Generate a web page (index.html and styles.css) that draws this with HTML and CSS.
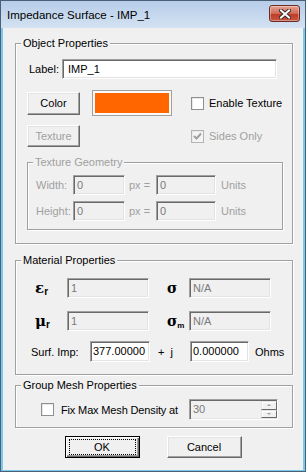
FILE: index.html
```html
<!DOCTYPE html>
<html lang="en">
<head>
    <meta charset="UTF-8">
    <title>Impedance Surface - IMP_1</title>
    <link rel="stylesheet" href="styles.css">
</head>
<body>
    <div class="window">
        <div class="titlebar">
            <span class="title">Impedance Surface - IMP_1</span>
            <div class="close-btn">
                <svg width="12" height="10" viewBox="0 0 12 10">
                    <path d="M2 1.5 L10 8.5 M10 1.5 L2 8.5" stroke="#3a2a2a" stroke-width="4" stroke-linecap="square"/>
                    <path d="M2 1.5 L10 8.5 M10 1.5 L2 8.5" stroke="#fff" stroke-width="2" stroke-linecap="square"/>
                </svg>
            </div>
        </div>

        <div class="client">
            <!-- Object properties -->
            <div class="group group-object">
                <span class="group-title">Object Properties</span>
                <div class="label-row">
                    <span class="field-label">Label:</span>
                    <div class="edit edit-label">IMP_1</div>
                </div>
                <div class="color-grid">
                    <div class="btn btn-color">Color</div>
                    <div class="swatch"><div class="swatch-fill"></div></div>
                    <div class="check-row">
                        <span class="checkbox"></span>
                        <span>Enable Texture</span>
                    </div>
                    <div class="btn btn-texture disabled">Texture</div>
                    <div></div>
                    <div class="check-row disabled">
                        <span class="checkbox checked">
                            <svg width="9" height="9" viewBox="0 0 9 9">
                                <polyline points="1,4 3.5,6.5 8,1.5" fill="none" stroke="#a0a0a0" stroke-width="2"/>
                            </svg>
                        </span>
                        <span>Sides Only</span>
                    </div>
                </div>

                <div class="group group-geo">
                    <span class="group-title disabled">Texture Geometry</span>
                    <div class="geo-row">
                        <span class="geo-label disabled">Width:</span>
                        <div class="edit edit-off edit-px">0</div>
                        <span class="geo-eq disabled">px =</span>
                        <div class="edit edit-off edit-units">0</div>
                        <span class="geo-unit disabled">Units</span>
                    </div>
                    <div class="geo-row">
                        <span class="geo-label disabled">Height:</span>
                        <div class="edit edit-off edit-px">0</div>
                        <span class="geo-eq disabled">px =</span>
                        <div class="edit edit-off edit-units">0</div>
                        <span class="geo-unit disabled">Units</span>
                    </div>
                </div>
            </div>

            <!-- Material properties -->
            <div class="group group-material">
                <span class="group-title">Material Properties</span>
                <div class="mat-row">
                    <span class="sym sym-eps">&#949;<sub>r</sub></span>
                    <div class="edit edit-off edit-mat">1</div>
                    <span class="sym sym-sigma">&#963;</span>
                    <div class="edit edit-off edit-mat">N/A</div>
                </div>
                <div class="mat-row">
                    <span class="sym sym-mu">&#956;<sub>r</sub></span>
                    <div class="edit edit-off edit-mat">1</div>
                    <span class="sym sym-sigma">&#963;<sub>m</sub></span>
                    <div class="edit edit-off edit-mat">N/A</div>
                </div>
                <div class="surf-row">
                    <span class="surf-label">Surf. Imp:</span>
                    <div class="edit edit-surf">377.00000</div>
                    <span class="surf-j">+ &nbsp;j</span>
                    <div class="edit edit-surf edit-imag">0.000000</div>
                    <span class="surf-unit">Ohms</span>
                </div>
            </div>

            <!-- Group mesh properties -->
            <div class="group group-mesh">
                <span class="group-title">Group Mesh Properties</span>
                <div class="mesh-row">
                    <span class="checkbox"></span>
                    <span class="mesh-label">Fix Max Mesh Density at</span>
                    <div class="edit edit-off edit-spin">
                        <span>30</span>
                        <div class="spin">
                            <div class="spin-btn"><span class="arrow-up"></span></div>
                            <div class="spin-btn"><span class="arrow-down"></span></div>
                        </div>
                    </div>
                </div>
            </div>

            <div class="dialog-buttons">
                <div class="btn btn-dialog btn-default">OK</div>
                <div class="btn btn-dialog">Cancel</div>
            </div>
        </div>
    </div>
</body>
</html>
```

FILE: styles.css
```css
body {
    margin: 0;
    font-family: "Liberation Sans", Arial, sans-serif;
    font-size: 11px;
    color: #000;
}
.window {
    width: 306px;
    height: 472px;
    box-sizing: border-box;
    border: 1px solid #4a6076;
    background: #7cc8ec;
    display: flex;
    flex-direction: column;
}
.titlebar {
    height: 27px;
    flex: none;
    display: flex;
    align-items: center;
    padding: 0 5px 0 6px;
    background: linear-gradient(#b6cde9, #d4e2f2);
}
.title {
    flex: 1;
    font-size: 11.5px;
}
.close-btn {
    align-self: flex-start;
    margin-top: 4px;
    width: 31px;
    height: 17px;
    box-sizing: border-box;
    border: 1px solid #6b2b22;
    border-radius: 3px;
    background: linear-gradient(#e5a393, #d06a55 50%, #bd3a26 51%, #c9553d);
    display: flex;
    align-items: center;
    justify-content: center;
    box-shadow: inset 0 0 0 1px rgba(255,255,255,0.35);
}
.client {
    flex: 1;
    margin: 0 2px 1px;
    background: #f0f0f0;
    display: flex;
    flex-direction: column;
}

/* group boxes */
.group {
    position: relative;
    border: 1px solid #a0a0a0;
    box-shadow: inset 1px 1px 0 #fff, 1px 1px 0 #fff;
}
.group-title {
    position: absolute;
    top: -7px;
    left: 5px;
    padding: 0 2px;
    line-height: 13px;
    background: #f0f0f0;
}
.group-object {
    width: 278px;
    box-sizing: border-box;
    margin: 15px 0 0 12px;
    padding: 15px 0 13px 11px;
}
.group-material {
    width: 278px;
    box-sizing: border-box;
    margin: 16px 0 0 12px;
    padding: 17px 0 12px 15px;
}
.group-mesh {
    width: 278px;
    box-sizing: border-box;
    margin: 10px 0 0 12px;
    padding: 13px 14px 7px 25px;
}
.group-geo {
    width: 256px;
    box-sizing: border-box;
    margin-top: 15px;
    padding: 12px 0 8px 8px;
}

.disabled { color: #a0a0a0; }

/* edits */
.edit {
    height: 20px;
    box-sizing: border-box;
    border: 1px solid;
    border-color: #a0a0a0 #fff #fff #a0a0a0;
    box-shadow: inset 1px 1px 0 #696969, inset -1px -1px 0 #e3e3e3;
    background: #fff;
    padding: 0 3px;
    line-height: 18px;
    white-space: nowrap;
    overflow: hidden;
}
.edit-off {
    background: #f0f0f0;
    color: #7a7a7a;
}

/* buttons */
.btn {
    box-sizing: border-box;
    border: 1px solid;
    border-color: #fff #696969 #696969 #fff;
    box-shadow: inset -1px -1px 0 #a0a0a0, inset 1px 1px 0 #e3e3e3;
    background: #f0f0f0;
    display: flex;
    align-items: center;
    justify-content: center;
}
.btn-color { width: 53px; height: 23px; }
.btn-texture { width: 53px; height: 22px; }

/* object properties */
.label-row {
    display: flex;
    align-items: center;
    padding-left: 2px;
}
.field-label { width: 33px; }
.edit-label {
    width: 215px;
    padding-left: 5px;
}
.color-grid {
    display: grid;
    grid-template-columns: 65px 99px auto;
    grid-template-rows: 26px 22px;
    row-gap: 9px;
    align-items: center;
    margin-top: 11px;
}
.swatch {
    width: 80px;
    height: 26px;
    box-sizing: border-box;
    border: 1px solid #a0a0a0;
    padding: 2px;
    background: #fafafa;
}
.swatch-fill {
    height: 100%;
    background: #ff6600;
}
.check-row {
    display: flex;
    align-items: center;
    gap: 5px;
}
.checkbox {
    width: 13px;
    height: 13px;
    box-sizing: border-box;
    border: 1px solid #8e8f8f;
    background: #fff;
    box-shadow: inset 1px 1px 0 #e8e8e8;
    display: flex;
    align-items: center;
    justify-content: center;
    flex: none;
}
.checkbox.checked {
    border-color: #b4b4b4;
    background: #f4f4f4;
}

/* texture geometry */
.geo-row {
    display: flex;
    align-items: center;
}
.geo-row + .geo-row { margin-top: 6px; }
.geo-label { width: 37px; }
.edit-px { width: 52px; }
.geo-eq {
    width: 31px;
    box-sizing: border-box;
    padding-left: 4px;
}
.edit-units { width: 60px; }
.geo-unit { margin-left: 5px; }

/* material properties */
.mat-row {
    display: flex;
    align-items: center;
    padding-left: 4px;
}
.mat-row + .mat-row { margin-top: 13px; }
.sym {
    font-family: "DejaVu Serif", serif;
    font-weight: bold;
    font-size: 15px;
    line-height: 20px;
}
.sym sub {
    font-family: "Liberation Sans", Arial, sans-serif;
    font-size: 10px;
    vertical-align: -2px;
    line-height: 0;
}
.sym-eps, .sym-mu { width: 32px; }
.sym-sigma {
    width: 22px;
    margin-left: 18px;
    font-size: 14px;
}
.sym-sigma sub { font-size: 8px; }
.edit-mat { width: 82px; }
.surf-row {
    display: flex;
    align-items: center;
    margin-top: 10px;
}
.surf-label { width: 59px; }
.edit-surf {
    width: 60px;
    height: 21px;
    line-height: 19px;
    padding: 0 2px;
}
.surf-j {
    width: 40px;
    box-sizing: border-box;
    padding-left: 8px;
}
.edit-imag { width: 59px; }
.surf-unit { margin-left: 6px; }

/* mesh */
.mesh-row {
    display: flex;
    align-items: center;
}
.mesh-label {
    padding-left: 7px;
    letter-spacing: -0.15px;
    white-space: nowrap;
}
.edit-spin {
    width: 89px;
    height: 21px;
    line-height: 19px;
    margin-left: auto;
    display: flex;
    padding: 0 0 0 3px;
}
.edit-spin span { flex: 1; }
.spin {
    width: 16px;
    display: flex;
    flex-direction: column;
    padding: 1px 0;
}
.spin-btn {
    flex: 1;
    box-sizing: border-box;
    border: 1px solid;
    border-color: #e3e3e3 #696969 #696969 #e3e3e3;
    box-shadow: inset 1px 1px 0 #fff;
    background: #f0f0f0;
    display: flex;
    align-items: center;
    justify-content: center;
}
.spin .arrow-up, .spin .arrow-down {
    flex: none;
    width: 0;
    height: 0;
    border-left: 2px solid transparent;
    border-right: 2px solid transparent;
}
.spin .arrow-up { border-bottom: 2px solid #a0a0a0; }
.spin .arrow-down { border-top: 2px solid #a0a0a0; }

/* dialog buttons */
.dialog-buttons {
    display: flex;
    justify-content: center;
    gap: 27px;
    margin-top: 8px;
}
.btn-dialog {
    width: 75px;
    height: 22px;
}
.btn-default {
    position: relative;
    border: 1px solid #000;
    box-shadow: inset 1px 1px 0 #fff, inset -1px -1px 0 #696969, inset -2px -2px 0 #a0a0a0;
}
.btn-default::after {
    content: "";
    position: absolute;
    inset: 2px 3px;
    border: 1px dotted #000;
}
```
